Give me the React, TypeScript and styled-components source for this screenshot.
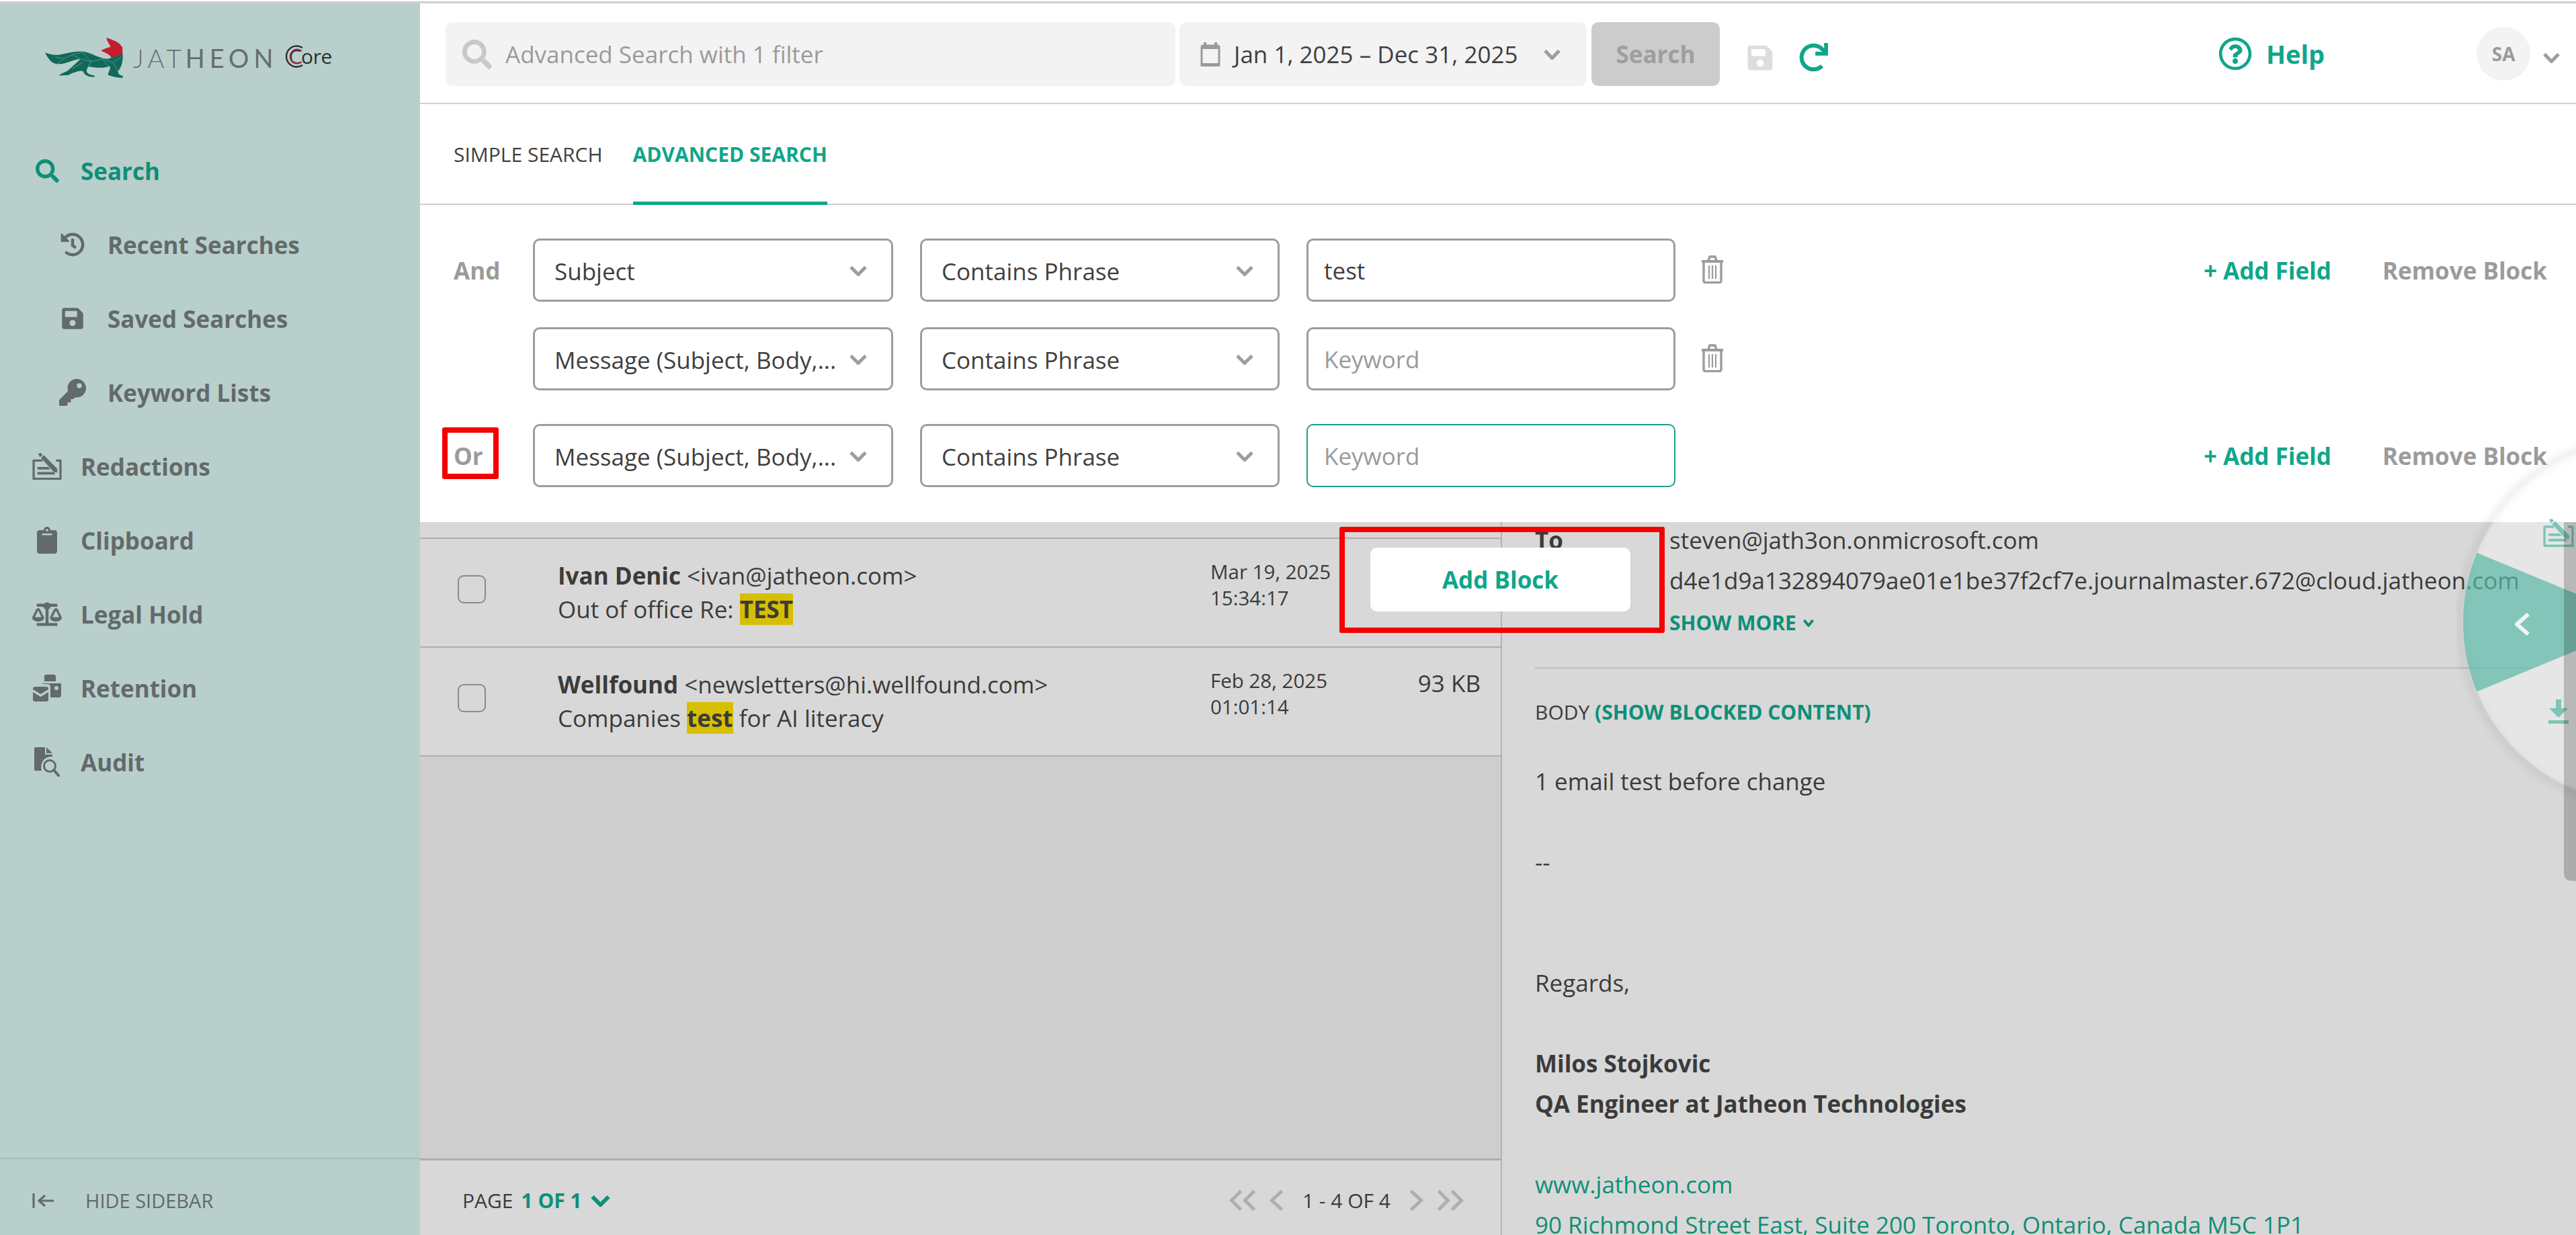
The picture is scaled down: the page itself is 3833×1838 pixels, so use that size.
import React from "react";
import styled, { createGlobalStyle } from "styled-components";
import {
  FaSearch, FaHistory, FaSave, FaKey, FaClipboard, FaBalanceScale, FaRedo, FaRegQuestionCircle,
} from "react-icons/fa";

const GlobalStyle = createGlobalStyle`
  html, body { margin: 0; padding: 0; background: #fff; }
  * { box-sizing: border-box; }
  body { font-family: "Open Sans", "Liberation Sans", sans-serif; color: #3b3b3b; }
`;

const TEAL = "#0fa68a";
const DIM_TEAL = "#0e8f78";

const Page = styled.div`
  position: relative;
  width: 3833px;
  height: 1838px;
  overflow: hidden;
  display: flex;
  padding-top: 2px;
  background: #fff;
`;
const TopRule = styled.div`
  position: absolute;
  left: 0; right: 0; top: 2px;
  height: 3px;
  background: #cfcfcf;
`;
const Sidebar = styled.aside`
  width: 625px;
  flex: none;
  margin-top: 3px;
  background: #b8cfcc;
  display: flex;
  flex-direction: column;
  color: #636a69;
`;
const Logo = styled.div`
  height: 194px;
  padding: 50px 0 0 66px;
  display: flex;
  align-items: flex-start;
`;
const FoxSvg = styled.svg`
  width: 118px;
  height: 62px;
  flex: none;
`;
const Wordmark = styled.div`
  margin: 9px 0 0 14px;
  font-family: "Lato", "Open Sans", sans-serif;
  font-size: 38px;
  line-height: 44px;
  letter-spacing: 6px;
  font-weight: 300;
  color: #676d6c;
  white-space: nowrap;
`;
const WordHeavy = styled.span`
  font-weight: 400;
  letter-spacing: 7px;
`;
const CoreMark = styled.div`
  position: relative;
  margin: 11px 0 0 6px;
  padding-left: 10px;
  font-size: 30px;
  line-height: 36px;
  letter-spacing: -0.4px;
  color: #2b2f30;
  white-space: nowrap;
`;
const CoreRing = styled.svg`
  position: absolute;
  left: 0; top: 0;
  width: 34px;
  height: 36px;
`;
const NavItem = styled.div<{ $sub?: boolean; $active?: boolean }>`
  height: 110px;
  display: flex;
  align-items: center;
  padding-left: ${(p) => (p.$sub ? "88px" : "46px")};
  font-size: 35px;
  font-weight: 700;
  color: ${(p) => (p.$active ? "#0c9077" : "#636a69")};
  white-space: nowrap;
`;
const NavIcon = styled.span`
  width: 48px;
  height: 48px;
  display: flex;
  align-items: center;
  justify-content: center;
  margin-right: 26px;
  flex: none;
`;
const SubIcon = styled(NavIcon)`
  width: 44px;
  margin-right: 30px;
  margin-left: -2px;
`;
const HideBar = styled.div`
  margin-top: auto;
  height: 115px;
  border-top: 2px solid #a6bcb9;
  display: flex;
  align-items: center;
  padding: 10px 0 0 48px;
  gap: 47px;
  font-size: 29px;
  color: #636a69;
`;

const Main = styled.main`
  flex: 1;
  min-width: 0;
  margin-top: 3px;
  display: flex;
  flex-direction: column;
`;
const Header = styled.header`
  height: 150px;
  flex: none;
  border-bottom: 2px solid #cfcfcf;
  padding: 28px 0 0 38px;
  display: flex;
  align-items: flex-start;
`;
const SearchBox = styled.div`
  width: 1086px;
  height: 95px;
  background: #f3f3f3;
  border-radius: 10px;
  display: flex;
  align-items: center;
  padding-left: 25px;
  font-size: 35px;
  color: #9a9a9a;
`;
const DateBox = styled.div`
  width: 606px;
  height: 95px;
  margin-left: 6px;
  background: #f3f3f3;
  border-radius: 10px;
  display: flex;
  align-items: center;
  padding-left: 31px;
  font-size: 35px;
  color: #3f3f3f;
  white-space: nowrap;
`;
const DateText = styled.span`
  margin-left: 20px;
  margin-right: 38px;
`;
const SearchButton = styled.div`
  width: 191px;
  height: 95px;
  margin-left: 7px;
  background: #cccccc;
  border-radius: 10px;
  display: flex;
  align-items: center;
  justify-content: center;
  font-size: 35px;
  font-weight: 700;
  color: #9e9e9e;
`;
const ToolIcons = styled.div`
  display: flex;
  align-items: center;
  gap: 37px;
  margin: 31px 0 0 39px;
  height: 43px;
`;
const Help = styled.div`
  display: flex;
  align-items: center;
  gap: 21px;
  margin: 22px 0 0 581px;
  height: 50px;
  font-size: 38px;
  font-weight: 700;
  color: ${TEAL};
`;
const Avatar = styled.div`
  width: 80px;
  height: 80px;
  margin: 7px 0 0 226px;
  border-radius: 50%;
  background: #f3f3f3;
  display: flex;
  align-items: center;
  justify-content: center;
  font-size: 28px;
  font-weight: 700;
  color: #9a9a9a;
  flex: none;
`;
const AvatarCaret = styled.div`
  margin: 44px 0 0 18px;
`;

const Tabs = styled.nav`
  height: 150px;
  flex: none;
  border-bottom: 2px solid #cfcfcf;
  padding-left: 50px;
  display: flex;
  gap: 45px;
  font-size: 30px;
`;
const Tab = styled.div<{ $active?: boolean }>`
  height: 150px;
  display: flex;
  align-items: center;
  padding-top: 4px;
  font-weight: ${(p) => (p.$active ? 700 : 400)};
  color: ${(p) => (p.$active ? TEAL : "#3f3f3f")};
  border-bottom: 5px solid ${(p) => (p.$active ? TEAL : "transparent")};
`;

const Builder = styled.section`
  height: 472px;
  flex: none;
  padding: 50px 43px 0 50px;
`;
const Row = styled.div<{ $gap?: number }>`
  display: flex;
  align-items: center;
  height: 94px;
  margin-bottom: ${(p) => p.$gap ?? 0}px;
`;
const Conj = styled.div`
  width: 118px;
  flex: none;
  font-size: 35px;
  font-weight: 700;
  color: #9b9b9b;
  padding-top: 1px;
`;
const Select = styled.div<{ $wide?: boolean }>`
  width: ${(p) => (p.$wide ? "536px" : "535px")};
  height: 94px;
  flex: none;
  margin-right: 40px;
  border: 3px solid #9d9d9d;
  border-radius: 10px;
  display: flex;
  align-items: center;
  justify-content: space-between;
  padding: 2px 35px 0 29px;
  font-size: 35px;
  color: #3f3f3f;
  white-space: nowrap;
`;
const KeywordField = styled.div<{ $focus?: boolean; $empty?: boolean }>`
  width: 549px;
  height: 94px;
  flex: none;
  border: ${(p) => (p.$focus ? "2px solid #1a9f88" : "3px solid #9d9d9d")};
  border-radius: 10px;
  display: flex;
  align-items: center;
  padding: 1px 0 0 ${(p) => (p.$focus ? "24px" : "23px")};
  font-size: 35px;
  color: ${(p) => (p.$empty ? "#9a9a9a" : "#3f3f3f")};
`;
const TrashButton = styled.div`
  width: 34px;
  height: 42px;
  margin-left: 38px;
  margin-bottom: 3px;
`;
const RowActions = styled.div`
  margin-left: auto;
  display: flex;
  gap: 76px;
  font-size: 35px;
  font-weight: 700;
  padding-top: 1px;
`;
const AddField = styled.span`
  color: ${TEAL};
`;
const RemoveBlock = styled.span`
  color: #9b9b9b;
`;

const Results = styled.section`
  position: relative;
  flex: 1;
  min-height: 0;
  display: flex;
  background: #d8d8d8;
`;
const ListPane = styled.div`
  width: 1610px;
  flex: none;
  border-right: 2px solid #b4b4b4;
  display: flex;
  flex-direction: column;
`;
const ListTop = styled.div`
  height: 25px;
  flex: none;
  border-bottom: 2px solid #aeaeae;
`;
const MailRow = styled.div`
  height: 162px;
  flex: none;
  border-bottom: 2px solid #aeaeae;
  display: flex;
  align-items: center;
  padding-left: 56px;
`;
const Check = styled.div`
  width: 42px;
  height: 42px;
  flex: none;
  border: 2px solid #8b8b8b;
  border-radius: 9px;
  margin: 0 107px 10px 0;
`;
const MailText = styled.div`
  width: 971px;
  flex: none;
  font-size: 35px;
  line-height: 50px;
  white-space: nowrap;
  color: #3b3b3b;
`;
const Sender = styled.b`
  font-weight: 700;
`;
const Mark = styled.b`
  display: inline-block;
  height: 47px;
  line-height: 47px;
  font-weight: 700;
  background: #d7bf00;
  vertical-align: top;
  margin-top: 1px;
`;
const MailDate = styled.div`
  width: 180px;
  flex: none;
  font-size: 29.5px;
  line-height: 39px;
  padding-bottom: 24px;
  white-space: nowrap;
`;
const MailSize = styled.div`
  flex: 1;
  text-align: right;
  padding: 0 30px 55px 0;
  font-size: 35px;
  white-space: nowrap;
`;
const ListRest = styled.div`
  flex: 1;
  background: #cecece;
`;
const ListFooter = styled.div`
  height: 114px;
  flex: none;
  border-top: 3px solid #aeaeae;
  display: flex;
  align-items: center;
  padding: 8px 0 0 63px;
  font-size: 30px;
  white-space: nowrap;
`;
const PageCurrent = styled.b`
  margin-left: 12px;
  margin-right: 12px;
  color: ${DIM_TEAL};
  font-weight: 700;
`;
const Pager = styled.div`
  margin-left: auto;
  display: flex;
  align-items: center;
  gap: 20px;
  margin-right: 55px;
`;
const PagerLabel = styled.span`
  margin: 0 8px;
`;
const ChevronPair = styled.span`
  display: flex;
`;

const Preview = styled.div`
  flex: 1;
  min-width: 0;
  margin-top: -3px;
  padding: 0 68px 0 49px;
  font-size: 35px;
  line-height: 60px;
  color: #3b3b3b;
  overflow: hidden;
`;
const Recipients = styled.div`
  display: grid;
  grid-template-columns: 200px 1fr;
  white-space: nowrap;
`;
const FieldName = styled.b`
  font-weight: 700;
`;
const ShowMore = styled.div`
  grid-column: 2;
  padding-top: 3px;
  font-size: 30px;
  font-weight: 700;
  color: ${DIM_TEAL};
  display: flex;
  align-items: center;
  gap: 9px;
`;
const Divider = styled.hr`
  margin: 36px 0 35px;
  border: 0;
  height: 2px;
  background: #bdbdbd;
`;
const BodyLabel = styled.div`
  font-size: 30px;
  margin-bottom: 43px;
`;
const BlockedLink = styled.b`
  font-weight: 700;
  color: ${DIM_TEAL};
`;
const Para = styled.div<{ $after?: number }>`
  margin-bottom: ${(p) => (p.$after ?? 0) * 60}px;
  white-space: nowrap;
`;
const StrongPara = styled(Para)`
  font-weight: 700;
`;
const LinkPara = styled(Para)`
  color: ${DIM_TEAL};
`;
const Scrollbar = styled.div`
  position: absolute;
  right: 0; top: 0;
  width: 18px;
  height: 534px;
  background: rgba(0, 0, 0, 0.2);
  border-bottom-left-radius: 10px;
  z-index: 4;
`;

const PieSvg = styled.svg`
  position: absolute;
  left: 3655px;
  top: 640px;
  width: 178px;
  height: 570px;
  z-index: 3;
`;
const HighlightFrame = styled.div`
  position: absolute;
  border: 8px solid #f50000;
  border-radius: 3px;
  z-index: 5;
`;
const OrFrame = styled(HighlightFrame)`
  left: 658px;
  top: 636px;
  width: 84px;
  height: 77px;
`;
const BlockFrame = styled(HighlightFrame)`
  left: 1993px;
  top: 784px;
  width: 484px;
  height: 158px;
  display: flex;
  align-items: center;
  padding: 0 43px 0 38px;
`;
const AddBlock = styled.div`
  width: 387px;
  height: 95px;
  margin-top: -1px;
  border-radius: 10px;
  background: #fff;
  display: flex;
  align-items: center;
  justify-content: center;
  font-size: 35px;
  font-weight: 700;
  color: ${TEAL};
`;

const Chevron: React.FC<{ w?: number; h?: number; color?: string; sw?: number; dir?: "down" | "left" | "right" }> = ({
  w = 28, h = 16, color = "#9d9d9d", sw = 5, dir = "down",
}) => {
  const pts =
    dir === "down"
      ? `${sw / 2 + 0.5},${sw / 2} ${w / 2},${h - sw / 2} ${w - sw / 2 - 0.5},${sw / 2}`
      : dir === "left"
      ? `${w - sw / 2},${sw / 2} ${sw / 2 + 1},${h / 2} ${w - sw / 2},${h - sw / 2}`
      : `${sw / 2},${sw / 2} ${w - sw / 2 - 1},${h / 2} ${sw / 2},${h - sw / 2}`;
  return (
    <svg width={w} height={h} viewBox={`0 0 ${w} ${h}`} style={{ flex: "none" }}>
      <polyline points={pts} fill="none" stroke={color} strokeWidth={sw} />
    </svg>
  );
};

const Fox = () => (
  <FoxSvg viewBox="160 132 290 152">
    <path
      d="M163 189 C182 196 200 200 222 196 C250 189 285 181 312 187 C340 194 365 212 392 212 L446 192 C449 215 444 240 430 256 C428 266 436 272 447 274 L446 282 C425 280 405 277 392 270 C396 258 402 248 400 238 C380 246 350 246 322 240 C312 250 312 262 324 268 L344 274 L342 279 C324 278 306 274 302 258 C290 252 268 262 248 271 L214 273 C224 262 240 262 252 250 C266 236 280 224 292 212 C262 214 240 232 205 231 C186 228 172 210 163 189 Z"
      fill="#11695a"
    />
    <path
      d="M200 205 L232 212 L262 196 L292 212 M232 212 L205 231 M262 196 L300 188 L330 222 L372 212 L395 240 M330 222 L292 212 M372 212 L412 226 L440 205 M412 226 L428 258 M300 225 L262 248 M330 222 L322 240"
      fill="none"
      stroke="#7cb8ac"
      strokeWidth="1.4"
    />
    <path
      d="M386 135 C410 142 436 150 446 172 L446 194 C430 200 416 205 406 208 C398 195 385 190 367 182 C378 174 392 172 402 168 C398 158 390 148 386 135 Z"
      fill="#c41e2e"
    />
  </FoxSvg>
);

const RedactionIcon: React.FC<{ color: string; size?: number }> = ({ color, size = 46 }) => (
  <svg width={size} height={size * 0.93} viewBox="0 0 46 43" style={{ flex: "none" }}>
    <path d="M16 12 H2 V40.5 H44 V12 H37" fill="none" stroke={color} strokeWidth="3.4" strokeLinejoin="round" />
    <path d="M9 1.5 L13 0 L16 3 L12 6.5 Z M13.5 8 L18 3.5 L39 25 L39 31 L33 29.5 Z" fill={color} />
    <path d="M8 22 H25 L28 26 H8 Z M8 30 H35 V34 H8 Z" fill={color} />
  </svg>
);
const RetentionIcon = () => (
  <svg width="42" height="40" viewBox="0 0 42 40">
    <path d="M17 2 a3 3 0 0 1 3 -2 H31 a3 3 0 0 1 3 3 V10 H17 Z" fill="#636a69" />
    <path d="M14 13 H42 V31 a3 3 0 0 1 -3 3 H26 V18 a4 4 0 0 0 -4 -4 H14 Z" fill="#636a69" />
    <circle cx="35" cy="20" r="3" fill="#b8cfcc" />
    <path d="M0 21 a3 3 0 0 1 3 -3 H20 a3 3 0 0 1 3 3 V22 L11.5 29 L0 22 Z M0 26 L11.5 33 L23 26 V37 a3 3 0 0 1 -3 3 H3 a3 3 0 0 1 -3 -3 Z" fill="#636a69" />
  </svg>
);
const AuditIcon = () => (
  <svg width="38" height="44" viewBox="0 0 38 44">
    <path d="M2 0 H16 V11 H27 V14 C16 13 8 22 11 35 H2 a2 2 0 0 1 -2 -2 V2 a2 2 0 0 1 2 -2 Z M18 0 L27 9 H18 Z" fill="#636a69" />
    <circle cx="23" cy="28" r="8.5" fill="none" stroke="#636a69" strokeWidth="3" />
    <path d="M29 34 L36 42" stroke="#636a69" strokeWidth="4" strokeLinecap="round" />
  </svg>
);
const TrashIcon = () => (
  <svg width="34" height="42" viewBox="0 0 34 42">
    <path d="M1 9 H33" stroke="#9b9b9b" strokeWidth="4" />
    <path d="M11 8 L13 2 H21 L23 8" fill="none" stroke="#9b9b9b" strokeWidth="3.4" />
    <path d="M4 10 V38 a2.5 2.5 0 0 0 2.5 2.5 H27.5 a2.5 2.5 0 0 0 2.5 -2.5 V10" fill="none" stroke="#9b9b9b" strokeWidth="3.4" />
    <path d="M12 15 V35 M17 15 V35 M22 15 V35" stroke="#9b9b9b" strokeWidth="2.2" />
  </svg>
);
const CalendarIcon = () => (
  <svg width="30" height="36" viewBox="0 0 30 36" style={{ flex: "none" }}>
    <path d="M7 0 V6 M23 0 V6" stroke="#9a9a9a" strokeWidth="4" />
    <path d="M2 7 a2 2 0 0 1 2 -2 H26 a2 2 0 0 1 2 2 V34 H2 Z" fill="none" stroke="#9a9a9a" strokeWidth="3" />
    <path d="M1 5 H29 V10 H1 Z" fill="#9a9a9a" />
    <path d="M1 31 H29 V36 H1 Z" fill="#9a9a9a" />
  </svg>
);
const HideIcon = () => (
  <svg width="32" height="26" viewBox="0 0 32 26">
    <path d="M2 2 V24" stroke="#636a69" strokeWidth="3.2" />
    <path d="M32 13 H11 M19 5 L10 13 L19 21" fill="none" stroke="#636a69" strokeWidth="3.2" />
  </svg>
);

const PieMenu = () => (
  <PieSvg viewBox="0 0 178 570">
    <defs>
      <filter id="pieBlur" x="-30%" y="-30%" width="160%" height="160%">
        <feGaussianBlur stdDeviation="6" />
      </filter>
    </defs>
    <circle cx="280" cy="286" r="274" fill="none" stroke="rgba(0,0,0,0.1)" strokeWidth="7" filter="url(#pieBlur)" />
    <circle cx="280" cy="286" r="270" fill="#fff" fillOpacity="0.36" />
    <path d="M280 286 L30.6 182.7 A270 270 0 0 0 30.6 389.3 Z" fill="#20a68c" fillOpacity="0.5" />
    <polyline points="107,274 90,289 107,304" fill="none" stroke="#eef5f3" strokeWidth="6" strokeLinejoin="round" />
    <g transform="translate(129 132)">
      <RedactionIcon color="#7dc5b6" />
    </g>
    <path d="M148 401 H156 V414 H166 L152 428 L138 414 H148 Z M137 432 H167 V437 H137 Z" fill="#7dc5b6" />
  </PieSvg>
);

const navTop = [
  { label: "Recent Searches", icon: <FaHistory size={36} /> },
  { label: "Saved Searches", icon: <FaSave size={36} /> },
  { label: "Keyword Lists", icon: <FaKey size={40} /> },
];
const navMain = [
  { label: "Redactions", icon: <RedactionIcon color="#636a69" size={44} /> },
  { label: "Clipboard", icon: <FaClipboard size={40} /> },
  { label: "Legal Hold", icon: <FaBalanceScale size={44} /> },
  { label: "Retention", icon: <RetentionIcon /> },
  { label: "Audit", icon: <AuditIcon /> },
];

export default function App() {
  return (
    <Page>
      <GlobalStyle />
      <TopRule />
      <Sidebar>
        <Logo>
          <Fox />
          <Wordmark>
            JAT<WordHeavy>HEON</WordHeavy>
          </Wordmark>
          <CoreMark>
            <CoreRing viewBox="0 0 34 36">
              <path d="M30 5 A15.5 15.5 0 1 0 30 31" fill="none" stroke="#2b2f30" strokeWidth="2.4" />
              <path d="M29 10 A10.5 10.5 0 1 0 29 26" fill="none" stroke="#a5283a" strokeWidth="1.8" />
            </CoreRing>
            Core
          </CoreMark>
        </Logo>
        <NavItem $active>
          <NavIcon>
            <FaSearch size={35} color="#0c9077" />
          </NavIcon>
          Search
        </NavItem>
        {navTop.map((n) => (
          <NavItem $sub key={n.label}>
            <SubIcon>{n.icon}</SubIcon>
            {n.label}
          </NavItem>
        ))}
        {navMain.map((n) => (
          <NavItem key={n.label}>
            <NavIcon>{n.icon}</NavIcon>
            {n.label}
          </NavItem>
        ))}
        <HideBar>
          <HideIcon />
          HIDE SIDEBAR
        </HideBar>
      </Sidebar>

      <Main>
        <Header>
          <SearchBox>
            <FaSearch size={44} color="#c8c8c8" style={{ marginRight: 20, flex: "none" }} />
            Advanced Search with 1 filter
          </SearchBox>
          <DateBox>
            <CalendarIcon />
            <DateText>Jan 1, 2025 – Dec 31, 2025</DateText>
            <Chevron w={27} h={16} color="#9d9d9d" />
          </DateBox>
          <SearchButton>Search</SearchButton>
          <ToolIcons>
            <FaSave size={42} color="#dddddd" />
            <FaRedo size={43} color={TEAL} />
          </ToolIcons>
          <Help>
            <FaRegQuestionCircle size={50} />
            Help
          </Help>
          <Avatar>SA</Avatar>
          <AvatarCaret>
            <Chevron w={27} h={16} color="#9d9d9d" />
          </AvatarCaret>
        </Header>
        <Tabs>
          <Tab>SIMPLE SEARCH</Tab>
          <Tab $active>ADVANCED SEARCH</Tab>
        </Tabs>
        <Builder>
          <Row $gap={38}>
            <Conj>And</Conj>
            <Select $wide>
              Subject
              <Chevron />
            </Select>
            <Select>
              Contains Phrase
              <Chevron />
            </Select>
            <KeywordField>test</KeywordField>
            <TrashButton>
              <TrashIcon />
            </TrashButton>
            <RowActions>
              <AddField>+ Add Field</AddField>
              <RemoveBlock>Remove Block</RemoveBlock>
            </RowActions>
          </Row>
          <Row $gap={50}>
            <Conj />
            <Select $wide>
              Message (Subject, Body,...
              <Chevron />
            </Select>
            <Select>
              Contains Phrase
              <Chevron />
            </Select>
            <KeywordField $empty>Keyword</KeywordField>
            <TrashButton>
              <TrashIcon />
            </TrashButton>
          </Row>
          <Row>
            <Conj>Or</Conj>
            <Select $wide>
              Message (Subject, Body,...
              <Chevron />
            </Select>
            <Select>
              Contains Phrase
              <Chevron />
            </Select>
            <KeywordField $empty $focus>
              Keyword
            </KeywordField>
            <RowActions>
              <AddField>+ Add Field</AddField>
              <RemoveBlock>Remove Block</RemoveBlock>
            </RowActions>
          </Row>
        </Builder>
        <Results>
          <ListPane>
            <ListTop />
            <MailRow>
              <Check />
              <MailText>
                <Sender>Ivan Denic</Sender> &lt;ivan@jatheon.com&gt;
                <br />
                Out of office Re: <Mark>TEST</Mark>
              </MailText>
              <MailDate>
                Mar 19, 2025
                <br />
                15:34:17
              </MailDate>
            </MailRow>
            <MailRow>
              <Check />
              <MailText>
                <Sender>Wellfound</Sender> &lt;newsletters@hi.wellfound.com&gt;
                <br />
                Companies <Mark>test</Mark> for AI literacy
              </MailText>
              <MailDate>
                Feb 28, 2025
                <br />
                01:01:14
              </MailDate>
              <MailSize>93 KB</MailSize>
            </MailRow>
            <ListRest />
            <ListFooter>
              PAGE
              <PageCurrent>1 OF 1</PageCurrent>
              <Chevron w={31} h={18} color={DIM_TEAL} sw={6} />
              <Pager>
                <ChevronPair>
                  <Chevron w={20} h={33} dir="left" color="#aeaeae" />
                  <Chevron w={20} h={33} dir="left" color="#aeaeae" />
                </ChevronPair>
                <Chevron w={21} h={33} dir="left" color="#aeaeae" />
                <PagerLabel>1 - 4 OF 4</PagerLabel>
                <Chevron w={21} h={33} dir="right" color="#aeaeae" />
                <ChevronPair>
                  <Chevron w={20} h={33} dir="right" color="#aeaeae" />
                  <Chevron w={20} h={33} dir="right" color="#aeaeae" />
                </ChevronPair>
              </Pager>
            </ListFooter>
          </ListPane>
          <Preview>
            <Recipients>
              <FieldName>To</FieldName>
              <span>steven@jath3on.onmicrosoft.com</span>
              <span />
              <span>d4e1d9a132894079ae01e1be37f2cf7e.journalmaster.672@cloud.jatheon.com</span>
              <ShowMore>
                SHOW MORE
                <Chevron w={18} h={12} color={DIM_TEAL} sw={4} />
              </ShowMore>
            </Recipients>
            <Divider />
            <BodyLabel>
              BODY <BlockedLink>(SHOW BLOCKED CONTENT)</BlockedLink>
            </BodyLabel>
            <Para $after={1}>1 email test before change</Para>
            <Para $after={2}>--</Para>
            <Para $after={1}>Regards,</Para>
            <StrongPara>Milos Stojkovic</StrongPara>
            <StrongPara $after={1}>QA Engineer at Jatheon Technologies</StrongPara>
            <LinkPara>www.jatheon.com</LinkPara>
            <LinkPara>90 Richmond Street East, Suite 200 Toronto, Ontario, Canada M5C 1P1</LinkPara>
          </Preview>
          <Scrollbar />
        </Results>
      </Main>

      <PieMenu />
      <OrFrame />
      <BlockFrame>
        <AddBlock>Add Block</AddBlock>
      </BlockFrame>
    </Page>
  );
}
